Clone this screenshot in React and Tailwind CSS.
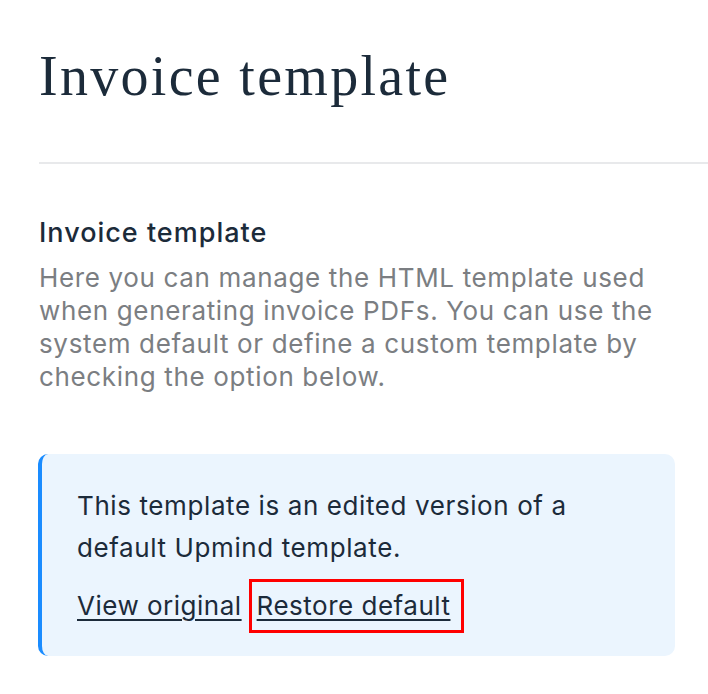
export default function App() {
  return (
    <div className="min-h-screen bg-white pl-[39px] pt-[41px]" style={{ fontFamily: "Inter, 'Noto Sans', sans-serif" }}>
      <h1
        className="text-[56px] leading-[70px] tracking-[2.3px] text-[#1c2b3a]"
        style={{ fontFamily: "'Liberation Serif', 'DejaVu Serif', serif" }}
      >
        Invoice template
      </h1>
      <div className="mt-[51px] h-[2px] bg-[#e8e9eb]" />
      <section className="mt-[53px] pr-[30px]">
        <h2 className="text-[27px] font-medium leading-[32px] tracking-[1px] text-[#1c2b3a]">Invoice template</h2>
        <p className="mt-[12px] text-[26px] leading-[33px] tracking-[0.65px] text-[#7b7e82]">
          Here you can manage the HTML template used when generating invoice PDFs. You can use the system default or define a custom template by checking the option below.
        </p>
        <div className="-ml-px mt-[61px] w-[637px] rounded-[10px] border-l-4 border-[#1a8cff] bg-[#ebf5fe] pb-[23px] pl-[35px] pr-[40px] pt-[31px]">
          <p className="text-[26px] leading-[42px] tracking-[0.6px] text-[#1c2b3a]">
            This template is an edited version of a default Upmind template.
          </p>
          <div className="mt-[10px] flex items-center gap-[7px] text-[26px] leading-[32px] tracking-[0.5px] text-[#1c2b3a]">
            <a className="underline decoration-2 underline-offset-4">View original</a>
            <span className="border-[3px] border-[#ff0000] py-[8px] pl-[5px] pr-[11px]">
              <a className="underline decoration-2 underline-offset-4">Restore default</a>
            </span>
          </div>
        </div>
      </section>
    </div>
  );
}
